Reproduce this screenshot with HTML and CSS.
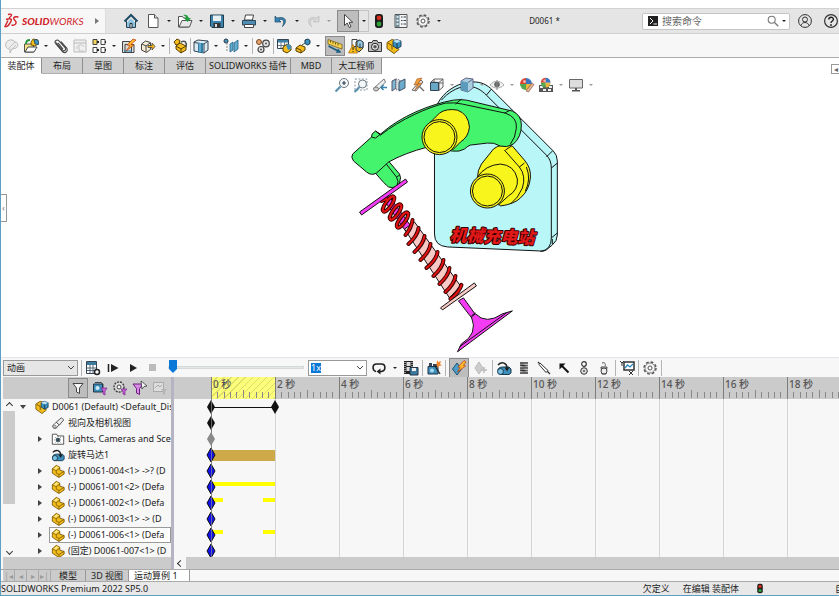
FILE: index.html
```
<!DOCTYPE html>
<html lang="zh-CN">
<head>
    <meta charset="UTF-8">
    <meta name="viewport" content="width=device-width, initial-scale=1.0">
    <title>D0061 - SOLIDWORKS</title>
    <link rel="stylesheet" href="styles.css">
</head>
<body>
    <!-- Icon sprite -->
    <svg class="sprite" aria-hidden="true">
        <symbol id="i-home" viewBox="0 0 16 16"><path d="M3.500 8v6.500h3.500V10h2v4.500h3.500V8" fill="#fff" stroke="#2a3f4c"/><path d="M1.500 8.500 8 2l6.500 6.500" fill="none" stroke="#1f4a66" stroke-width="2"/><path d="M4 9.500 8 5.500l4 4V14H9.500v-4h-3v4H4z" fill="#8cc4e0"/><path d="M7 10.500h2V15H7z" fill="#fff" stroke="#234"/></symbol>
        <symbol id="i-new" viewBox="0 0 16 16"><path d="M3.500 1.500h6l3.500 3.500v9.500H3.500z" fill="#fff" stroke="#555"/><path d="M9.500 1.500V5H13" fill="#ddd" stroke="#555"/></symbol>
        <symbol id="i-open" viewBox="0 0 16 16"><path d="M1.500 14V3.500h4l1 1.500h5V14z" fill="#fff" stroke="#555"/><path d="m2 14 3-6.500h10L12.500 14z" fill="#e8e8e8" stroke="#555"/><path d="M6 2c3-1 5 0 5.500 3H14l-3.500 4L7 5h2C9 3.500 8 3 6 2z" fill="#1f9d3a"/></symbol>
        <symbol id="i-save" viewBox="0 0 16 16"><path d="M1.500 2h13v12.500H3L1.500 13z" fill="#3d84ad" stroke="#1f3c4e"/><path d="M4 2.500h8v5.500H4z" fill="#e8f0f4"/><path d="M4.500 10h7v4.500h-7z" fill="#333"/><path d="M6 11h2v3H6z" fill="#ddd"/></symbol>
        <symbol id="i-print" viewBox="0 0 16 16"><path d="M4.500 2h8l-1 5h-8z" fill="#fff" stroke="#444"/><path d="M1.500 7.500h13v4.500h-13z" fill="#4f8fb5" stroke="#2c4a5c"/><path d="M3.500 11.500h9v3h-9z" fill="#fff" stroke="#444"/></symbol>
        <symbol id="i-undo" viewBox="0 0 16 16"><path d="M2 3v6h6L6 7c4-2 6 1 3.500 6.500C14.500 9 13.500 2.500 4 5z" fill="#3484b5" stroke="#1d4965" stroke-width=".7"/></symbol>
        <symbol id="i-redo" viewBox="0 0 16 16"><path d="M14 3v6H8l2-2c-4-2-6 1-3.500 6.500C1.500 9 2.500 2.500 12 5z" fill="#d8d8d8" stroke="#bbb" stroke-width=".7"/></symbol>
        <symbol id="i-cursor" viewBox="0 0 16 16"><path d="M4.500 1.500v11l2.700-2.500 2 4.500 1.800-.8-2-4.400h3.700z" fill="#fff" stroke="#333" stroke-width=".9"/></symbol>
        <symbol id="i-light" viewBox="0 0 16 16"><rect x="4" y="1" width="8" height="14" rx="3" fill="#1b1b1b"/><circle cx="8" cy="4.800" r="2.400" fill="#d3301f"/><circle cx="8" cy="11" r="2.400" fill="#2fa13b"/></symbol>
        <symbol id="i-list" viewBox="0 0 16 16"><path d="M2 1.500h12v13H2z" fill="#f4f4f4" stroke="#555"/><path d="M2.500 2h4v12h-4z" fill="#6f8a99"/><path d="M3.500 4h2M3.500 7.500h2M3.500 11h2" stroke="#fff" stroke-width="1.500"/><path d="M8 4h1.500M8 7.500h1.500M8 11h1.500M10.500 4H13M10.500 7.500H13M10.500 11H13" stroke="#345"/></symbol>
        <symbol id="i-gear" viewBox="0 0 16 16"><circle cx="8" cy="8" r="6" fill="none" stroke="#555" stroke-width="1.500" stroke-dasharray="2.700 2"/><circle cx="8" cy="8" r="5" fill="#f4f4f4" stroke="#666" stroke-width=".8"/><circle cx="8" cy="8" r="2" fill="#fff" stroke="#555"/></symbol>
        <symbol id="i-part" viewBox="0 0 16 16"><path d="M1.500 5.500 6 1.500l4 2V7l5 1.500v3L9 15.500 1.500 10.500z" fill="#f4bd1b" stroke="#6b4b00" stroke-width=".9"/><path d="m1.500 5.500 4.500 2v3L9 12v3M6 7.500 10 5M9 12l6-3.500" fill="none" stroke="#6b4b00" stroke-width=".8"/><path d="m3 5.500 3.500-3 2.500 1L5.500 6.500z" fill="#ffe98a"/></symbol>
        <symbol id="i-asm" viewBox="0 0 16 16"><path d="M1 4.500 6 1.500l5 1.500V9l2 2.500-5 4-7-5z" fill="#f4bd1b" stroke="#6b4b00" stroke-width=".9"/><path d="m2 5 4 2.500v4" fill="none" stroke="#6b4b00"/><path d="m7 3 3.500-1.500L15 3v5.500l-4 2-4-2.500z" fill="#3b8fc0" stroke="#16394f" stroke-width=".9"/><path d="m7 3 4 2 4-2-4.500-1.500z" fill="#b9e0f2"/><path d="M11 5v5.500" stroke="#16394f"/></symbol>
        <symbol id="i-bubble" viewBox="0 0 16 16"><path d="M2 5c2-4 7-4 9-1 3 0 4 4 1 6l-4 1-2 4v-4C2 11 1 8 2 5z" fill="#ececec" stroke="#bbb"/><path d="m5 10 6-6M8 11l4-4" stroke="#c4c4c4"/></symbol>
        <symbol id="i-insert" viewBox="0 0 16 16"><path d="M1.500 6h9v8h-9z" fill="#f7e388" stroke="#555"/><path d="m2 14 3-5h9l-3 5z" fill="#fff" stroke="#444"/><path d="m8 4 2-3 5 1v4l-3 2-4-1z" fill="#f4bd1b" stroke="#5b4000" stroke-width=".8"/><path d="m11 2 3-.5 1.500 2v3L12 6z" fill="#3f93c2" stroke="#16394f" stroke-width=".7"/><path d="M3 6c0-3 1-4 4-4" fill="none" stroke="#25953b" stroke-width="1.800"/></symbol>
        <symbol id="i-clip" viewBox="0 0 16 16"><path d="M3 4.500 9.500 12c1.500 1.800 4 0 2.800-2L6 2.800C4 1 1 3 2.500 5.500l7 8c2.500 2.500 6 0 4.200-3.500L8 3.500M5 5l5 6" fill="none" stroke="#444" stroke-width="1.100"/></symbol>
        <symbol id="i-ghost" viewBox="0 0 16 16"><path d="M2 2h12v12H2zM2 5h12" fill="#f0f0f0" stroke="#bbb"/><path d="M5 11c-1-4 5-6 7-2M7 8v5h5" fill="none" stroke="#c4c4c4"/></symbol>
        <symbol id="i-pattern" viewBox="0 0 16 16"><path d="M2 1.500h4v5H2z" fill="#f4d55a" stroke="#444"/><path d="M2 9.500h4v5H2zM10 1.500h4v5h-4zM10 9.500h4v5h-4z" fill="#fff" stroke="#444"/><path d="M6 4h2M6 12h2M14 4h1M14 12h1" stroke="#222" stroke-width="2"/></symbol>
        <symbol id="i-smart" viewBox="0 0 16 16"><path d="M1.500 3.500h9v11h-9zM4 6.500h9v8H4z" fill="#ddd" stroke="#444"/><path d="M3 13h8" stroke="#1f7fb0"/><path d="m12 1-6 6 3 .5L5 13l8-6-3-.5L15 2z" fill="#ffb52c" stroke="#b33b10" stroke-width=".7"/></symbol>
        <symbol id="i-move" viewBox="0 0 16 16"><path d="m1.500 6 4-3 5 1.500v7l-4 3-5-2.500z" fill="#f5edd4" stroke="#444"/><path d="m2 6 4 2v6M6 8l4-3" fill="none" stroke="#444"/><path d="M8 7.500h4V5l3 3.500L12 12V9.500H8z" fill="#f2b31a" stroke="#333" stroke-width=".7"/></symbol>
        <symbol id="i-show" viewBox="0 0 16 16"><path d="m2 4 3-3 3 1.500L7 6 4 7z" fill="#f4bd1b" stroke="#5b4000"/><path d="M4 8 8 5l6 3v4l-5 3-5-4z" fill="#f4bd1b" stroke="#5b4000"/><path d="m4 8 5 3v4M9 11l5-3" fill="none" stroke="#5b4000"/><path d="M9 4c4-2 6 0 5 5" fill="none" stroke="#555" stroke-width="1.500"/></symbol>
        <symbol id="i-feature" viewBox="0 0 16 16"><path d="m1 4 4-2 10 1v9l-4 3-10-2z" fill="#dceaf1" stroke="#345"/><path d="M1 4.500 11 6v8.500M11 6l4-3" fill="none" stroke="#345"/><path d="M5 5h5v9.500H5z" fill="#2f7fab"/><path d="M7 5v9" stroke="#9cd0e8"/></symbol>
        <symbol id="i-plane" viewBox="0 0 16 16"><circle cx="3" cy="3" r="2" fill="#4b9bc5" stroke="#234"/><path d="m7 6 3-2v8l-3 2zM11 5l4-3v9l-4 3z" fill="#61aed3" stroke="#245f80" stroke-width=".8"/><path d="M4 5v9" stroke="#888" stroke-dasharray="2 1"/></symbol>
        <symbol id="i-gears" viewBox="0 0 16 16"><circle cx="4" cy="4" r="2.500" fill="#e4a06b" stroke="#7b4c28"/><circle cx="11" cy="5.500" r="3.300" fill="#e6e6e6" stroke="#444" stroke-width="1.200"/><circle cx="6" cy="11.500" r="3" fill="#e6e6e6" stroke="#444" stroke-width="1.200"/><circle cx="11" cy="5.500" r="1" fill="#555"/><circle cx="6" cy="11.500" r="1" fill="#555"/></symbol>
        <symbol id="i-bom" viewBox="0 0 16 16"><path d="M1.500 1.500h11v9h-11z" fill="#fff" stroke="#345"/><path d="M2 2h10v2.500H2z" fill="#3c7fa5"/><path d="M2 7.500h10M5 4v6M8.500 4v6" stroke="#678"/><path d="m7 9 4-3 4 2v4l-4 3-4-2z" fill="#f4bd1b" stroke="#5b4000"/><path d="m10 7 3-1 2 2v3l-3 1z" fill="#3d92c0"/></symbol>
        <symbol id="i-explode" viewBox="0 0 16 16"><path d="m1 10 4-3 5 2v3l-4 3-5-2z" fill="#f4bd1b" stroke="#5b4000"/><path d="m1 10 5 2v3" fill="none" stroke="#5b4000"/><path d="m10 2 3-1 2 1.500v3L12.500 7 10 5.500z" fill="#3d92c0" stroke="#16394f"/><path d="m7 7 3-2" stroke="#555"/></symbol>
        <symbol id="i-ruler" viewBox="0 0 16 16"><path d="m1 1.500 14 5v4.500L1 6z" fill="#f7d452" stroke="#6b5200" stroke-width=".7"/><path d="M3.500 2.500v2M6 3.500v2M8.500 4.500v2M11 5.500v2" stroke="#6b5200"/><path d="m1.500 8 9.500 5" stroke="#1f5f84" stroke-width="1.800"/><path d="m9 15 5.500-.5L11 10.500z" fill="#1f5f84"/></symbol>
        <symbol id="i-warn" viewBox="0 0 16 16"><path d="M4 1.500h5v7H4z" fill="#fff" stroke="#444"/><path d="m8 4 3-2 4 2v6l-4 4-3-2z" fill="#f4bd1b" stroke="#234"/><path d="m9 3.500 3-1.500 3 2v5l-3 1-3-2z" fill="#9ccbe2" stroke="#234" stroke-width=".8"/><path d="M12 5.500V10" stroke="#234"/><path d="M5 6.500 9.500 15h-9z" fill="#ffc11c" stroke="#a66200" stroke-width=".7"/><path d="M5 9v3M5 13v1" stroke="#222"/></symbol>
        <symbol id="i-camera" viewBox="0 0 16 16"><path d="M1.500 4.500H5l1-2h4l1 2h3.500v9h-13z" fill="#bbb" stroke="#333"/><circle cx="8" cy="8.800" r="3.500" fill="#f0f0f0" stroke="#222"/><circle cx="8" cy="8.800" r="1.800" fill="#555"/></symbol>
        <symbol id="i-user" viewBox="0 0 16 16"><circle cx="8" cy="8" r="6.400" fill="none" stroke="#333"/><circle cx="8" cy="6.500" r="2.500" fill="none" stroke="#333"/><path d="M4 12.500c1-4 7-4 8 0" fill="none" stroke="#333"/></symbol>
        <symbol id="i-help" viewBox="0 0 16 16"><circle cx="8" cy="8" r="6.400" fill="none" stroke="#333" stroke-width="1.200"/><path d="M5.800 6.500c0-3 4.600-3 4.600-.2C10.400 8 8 8 8 10" fill="none" stroke="#222" stroke-width="1.400"/><circle cx="8" cy="12" r=".9" fill="#222"/></symbol>
        <symbol id="i-search" viewBox="0 0 16 16"><circle cx="6.500" cy="6.500" r="4" fill="none" stroke="#777" stroke-width="1.200"/><path d="m9.500 9.500 4.500 4.500" stroke="#777" stroke-width="1.500"/></symbol>
        <symbol id="i-zoomfit" viewBox="0 0 16 16"><circle cx="10" cy="6" r="4.500" fill="#f4f8fa" stroke="#6b7780"/><path d="M8 6h4M10 4v4" stroke="#345" stroke-width="1.200"/><path d="m6.500 9.500-5 5" stroke="#5b91ae" stroke-width="2.200"/></symbol>
        <symbol id="i-zoomarea" viewBox="0 0 16 16"><path d="M2 2h12v11H2z" fill="none" stroke="#8a9aa4" stroke-dasharray="2 1.500"/><circle cx="9.500" cy="7" r="4" fill="#f4f8fa" stroke="#6b7780"/><path d="m6.500 10-5 5" stroke="#5b91ae" stroke-width="2.200"/></symbol>
        <symbol id="i-prev" viewBox="0 0 16 16"><path d="m2 11 10-9 1.500 3L6 13z" fill="#eee" stroke="#777"/><ellipse cx="4" cy="12" rx="2.500" ry="2" fill="#ccc" stroke="#777"/><path d="M15 10.500H9m2.500-2.500L9 10.500l2.500 2.500" fill="none" stroke="#3b83a8" stroke-width="1.500"/></symbol>
        <symbol id="i-section" viewBox="0 0 16 16"><path d="m1 4 4-2v9l-4 3z" fill="#7eb8d4" stroke="#556"/><path d="m5 2 4 1v9l-4 1z" fill="#d5dce0" stroke="#667" stroke-dasharray="1 1"/><path d="m8 5 6-3v9l-6 3z" fill="#6aaaca" stroke="#456"/></symbol>
        <symbol id="i-view" viewBox="0 0 16 16"><path d="m2 13 9-10 2 2-7 9z" fill="#eee" stroke="#666"/><path d="M7 2 4 8l4-1-3 6 7-7-4 .500L12 1z" fill="#f0a236" stroke="#a54b1c" stroke-width=".6"/><path d="m9 9 5 5" stroke="#777" stroke-width="1.500"/></symbol>
        <symbol id="i-orient" viewBox="0 0 16 16"><path d="m2 5 3-3h9v8l-4 3.500V5.500z" fill="#f4f4f4" stroke="#666"/><path d="M1.500 5.500h8v8h-8z" fill="#68a7c5" stroke="#345"/><path d="m10 5.500 4-3.500M5 2v3M14 6h-4" stroke="#666"/></symbol>
        <symbol id="i-cube" viewBox="0 0 16 16"><path d="m2 4 5-3 7 1v9l-5 4-7-2z" fill="#a9cfdf" stroke="#668"/><path d="m2 4 7 1.500V15l-7-2z" fill="#5b9aba"/><path d="m9 5.500 5-3.500" stroke="#668"/></symbol>
        <symbol id="i-eye" viewBox="0 0 16 16"><path d="M1 8c4-5 10-5 14 0-4 4-10 4-14 0z" fill="#f2f2f2" stroke="#aaa"/><circle cx="8" cy="7.500" r="2.800" fill="#666"/><path d="M8 3v10" stroke="#888"/></symbol>
        <symbol id="i-ball" viewBox="0 0 16 16"><path d="M7 7V1a6 6 0 0 0-6 6z" fill="#d8432f"/><path d="M7 7h6a6 6 0 0 0-6-6z" fill="#3976be"/><path d="M1 7a6 6 0 0 0 6 6V7z" fill="#52a84f"/><path d="M7 7v6a6 6 0 0 0 6-6z" fill="#e9b73f"/><circle cx="5.500" cy="4.500" r="1.500" fill="#fff" opacity=".6"/></symbol>
        <symbol id="i-appear" viewBox="0 0 16 16"><use href="#i-ball"/><path d="m7 14 6-8 2 1.500L9.500 15z" fill="#e4b58c" stroke="#744" stroke-width=".6"/></symbol>
        <symbol id="i-scene" viewBox="0 0 16 16"><path d="M1 8h14v7H1z" fill="#555"/><path d="M2 9h3v2H2zM11 9h3v2h-3zM5 12h3v2H5zM10 12h3v2h-3z" fill="#eee"/><g transform="translate(2)"><use href="#i-ball" width="13" height="13"/></g></symbol>
        <symbol id="i-monitor" viewBox="0 0 16 16"><path d="M1.500 2.500h13v8.500h-13z" fill="#ddd" stroke="#666"/><path d="M7 11h2v2h3v1.500H4V13h3z" fill="#555"/></symbol>
        <symbol id="i-calc" viewBox="0 0 16 16"><path d="M1.500 1.500h10v12h-10z" fill="#fff" stroke="#345"/><path d="M2 2h9v3H2z" fill="#3e7c9f"/><path d="M2 8h9M2 10.500h9M5 5v8M8 5v8" stroke="#567"/><circle cx="12" cy="12" r="2.500" fill="#fff" stroke="#222" stroke-width="1.500"/></symbol>
        <symbol id="i-playstart" viewBox="0 0 16 16"><path d="M3.500 4v8" stroke="#222" stroke-width="1.500"/><path d="m6 4 7.500 4L6 12z" fill="#222"/></symbol>
        <symbol id="i-play" viewBox="0 0 16 16"><path d="m5 4 7 4-7 4z" fill="#222"/></symbol>
        <symbol id="i-stop" viewBox="0 0 16 16"><path d="M4 4h7v7H4z" fill="#bbb"/></symbol>
        <symbol id="i-loop" viewBox="0 0 16 16"><path d="M5 11.500C1 10.500 1 4 5.500 4h5c4.500 0 4.500 7 0 7.500H8" fill="none" stroke="#222" stroke-width="1.600"/><path d="m9.500 8.500-4 3 4 3z" fill="#222"/></symbol>
        <symbol id="i-film" viewBox="0 0 16 16"><path d="M1 1h9v13H1z" fill="#222"/><path d="M3.500 2h4v4h-4zM3.500 7h4v4h-4z" fill="#ddd"/><path d="M2 2v12M9 2v7" stroke="#fff" stroke-dasharray="1 1"/><path d="M7 7.500h8V15H7z" fill="#3e7c9f" stroke="#234"/><path d="M9 8h4v3H9z" fill="#eee"/></symbol>
        <symbol id="i-wizard" viewBox="0 0 16 16"><path d="M2 6.500h10V14H2z" fill="#3c8ebb" stroke="#234"/><path d="M3 3h3v3H3zM7 4h4v2H7z" fill="#345"/><circle cx="6" cy="10.500" r="2" fill="#a8d8ef"/><path d="m9 6 5 8" stroke="#222" stroke-width="1.300"/><path d="m11 0 1 2 3-1-1 3 2 1.500-3 .5-1 2-1.500-3z" fill="#f5842a"/></symbol>
        <symbol id="i-autokey" viewBox="0 0 16 16"><path d="m6 3 4.500 6L6 15 1.500 9z" fill="#4b9cc9" stroke="#1e5470"/><path d="m13 .500-6 6.500 2 .5L6.500 12l8-6-2-.5L15 2z" fill="#ffb52c" stroke="#b33b10" stroke-width=".7"/></symbol>
        <symbol id="i-addkey" viewBox="0 0 16 16"><path d="m6 2 4 6-4 6-4-6z" fill="#ccc" stroke="#bbb"/><path d="M11 7v6M8 10h6" stroke="#bbb" stroke-width="1.500"/></symbol>
        <symbol id="i-motor" viewBox="0 0 16 16"><path d="M2 10c0-2 2-3 5-3h6l2 2v4l-2 1.500H4z" fill="#3c8ebb" stroke="#16394f"/><ellipse cx="4.500" cy="11.500" rx="3" ry="3" fill="#7cc0e0" stroke="#16394f"/><path d="M2 5c4-4 9-2 9 3" fill="none" stroke="#222" stroke-width="1.500"/><path d="m8.500 7.500 5 0-2.500 4z" fill="#222"/></symbol>
        <symbol id="i-spring" viewBox="0 0 16 16"><path d="M4 3h8M4 5.500h8M4 8h8M4 10.500h8M4 13h8" stroke="#333" stroke-width="1.700"/><path d="m4 5 8-2M4 7.500l8-2M4 10l8-2M4 12.500l8-2" stroke="#777"/></symbol>
        <symbol id="i-damper" viewBox="0 0 16 16"><path d="m2 2 12 12" stroke="#333" stroke-width="1.200"/><path d="m4 3 8 7.500-2 2L3 4.500z" fill="#fff" stroke="#333"/></symbol>
        <symbol id="i-force" viewBox="0 0 16 16"><path d="m12.500 12.500-7-7" stroke="#111" stroke-width="2"/><path d="M3.500 3.500h6l-6 6z" fill="#111"/></symbol>
        <symbol id="i-contact" viewBox="0 0 16 16"><circle cx="8" cy="4" r="2.300" fill="#fff" stroke="#333" stroke-width="1.200"/><circle cx="8" cy="11" r="3.300" fill="#ddd" stroke="#333"/><circle cx="8" cy="11" r="1" fill="#555"/></symbol>
        <symbol id="i-gravity" viewBox="0 0 16 16"><path d="M5 7h6l-1 7H6z" fill="#ddd" stroke="#444"/><circle cx="8" cy="11" r="3" fill="#eee" stroke="#444"/><path d="M6 3c3-1 4 1 3 3" fill="none" stroke="#555"/></symbol>
        <symbol id="i-result" viewBox="0 0 16 16"><path d="M5 2h10v8H5z" fill="#fff" stroke="#333" stroke-width="1.500"/><path d="m6 8 2.500-3L11 7l3-3" fill="none" stroke="#2d88bb" stroke-width="1.300"/><path d="m1 1 2 2 2-2M3 3v3M10 11l4 4M14 11l-4 4" fill="none" stroke="#333"/></symbol>
        <symbol id="i-filter" viewBox="0 0 16 16"><path d="M3 3.500h10L9.500 8v5.500l-3-1.500V8z" fill="#f6f6f6" stroke="#444"/></symbol>
        <symbol id="i-filteranim" viewBox="0 0 16 16"><path d="M1.500 4h9v8h-9z" fill="#3c8ebb" stroke="#234"/><path d="M3 2.500h6l2 1.500v5" fill="none" stroke="#345"/><circle cx="5.500" cy="8" r="2" fill="#cfeaf6"/><path d="M9 8h6l-2 3v4l-2-1v-3z" fill="#c768d6" stroke="#7c2390" stroke-width=".7"/></symbol>
        <symbol id="i-filterdrive" viewBox="0 0 16 16"><circle cx="7" cy="7" r="5" fill="#ddd" stroke="#444" stroke-width="1.500" stroke-dasharray="2 1"/><circle cx="7" cy="7" r="2" fill="#fff" stroke="#444"/><path d="M9 9h6l-2 2.500V15l-2-1v-2.500z" fill="#c768d6" stroke="#7c2390" stroke-width=".7"/></symbol>
        <symbol id="i-filtersel" viewBox="0 0 16 16"><path d="M1 4h10L7.500 8.500v6l-3-1.500V8.500z" fill="#d98be6" stroke="#6c1d80"/><path d="m9 1 6 5-3 .5-2 2.500z" fill="#fff" stroke="#333" stroke-width=".8"/></symbol>
        <symbol id="i-filterres" viewBox="0 0 16 16"><path d="M1.500 2.500h10v9h-10zM3 8l3-3 2 2 2-2" fill="#ddd" stroke="#aaa"/><path d="M9 9h6l-2 2.500V15l-2-1v-2.500z" fill="#b5b5b5"/></symbol>
        <symbol id="i-torch" viewBox="0 0 16 16"><path d="m6 7 6-5 2.500 2.500-5 6z" fill="#eee" stroke="#444"/><path d="M2 11 6 7l3 3-3 4c-2 1-5-1-4-3z" fill="#fff" stroke="#444"/><ellipse cx="4" cy="12" rx="2" ry="1.500" fill="#ccc" stroke="#555" stroke-width=".7"/></symbol>
        <symbol id="i-lights" viewBox="0 0 16 16"><path d="M1.500 14V2.500h5l1 2h7V14z" fill="#fff" stroke="#444"/><circle cx="8" cy="9" r="2.500" fill="#456b80"/><path d="M8 5v8M4 9h8M5 6l6 6M11 6l-6 6" stroke="#333" stroke-dasharray="1 1"/></symbol>
        <symbol id="i-ticks" viewBox="0 0 64 22"><path d="M.5 0v22" stroke="#7d7d7d"/><path d="M6.500 15v6M13.500 15v6M19.500 15v6M25.500 15v6M32.500 13v8M38.500 15v6M45.500 15v6M51.500 15v6M57.500 15v6" stroke="#888"/></symbol>
    </svg>

    <!-- Title bar -->
    <header class="titlebar">
        <div class="brand">
            <svg class="brand-mark" viewBox="0 0 16 16" aria-hidden="true"><path d="M4 1.500c4-1 5 .5 1 3.500M2 6.500c6-2 7 0 3 5-1 1.500-3 2.500-4 2l3-6M14.500 4c-5-1-6 1-3.500 3.500S11 13 7.500 12" fill="none" stroke="#d2232a" stroke-width="1.400"/></svg>
            <span class="brand-name"><b>SOLID</b>WORKS</span>
            <button class="brand-more" aria-label="菜单"></button>
        </div>
        <nav class="quick" aria-label="快速访问">
            <button class="tool spaced" aria-label="主页"><svg><use href="#i-home"/></svg></button>
            <button class="tool" aria-label="新建"><svg><use href="#i-new"/></svg></button><button class="drop" aria-label="新建选项"></button>
            <button class="tool" aria-label="打开"><svg><use href="#i-open"/></svg></button><button class="drop" aria-label="打开选项"></button>
            <button class="tool" aria-label="保存"><svg><use href="#i-save"/></svg></button><button class="drop" aria-label="保存选项"></button>
            <button class="tool" aria-label="打印"><svg><use href="#i-print"/></svg></button><button class="drop" aria-label="打印选项"></button>
            <button class="tool" aria-label="撤销"><svg><use href="#i-undo"/></svg></button><button class="drop" aria-label="撤销选项"></button>
            <button class="tool" aria-label="重做"><svg><use href="#i-redo"/></svg></button><button class="drop faded" aria-label="重做选项"></button>
            <button class="tool pressed" aria-label="选择"><svg><use href="#i-cursor"/></svg></button><button class="drop boxed" aria-label="选择选项"></button>
            <button class="tool spaced" aria-label="重建模型"><svg><use href="#i-light"/></svg></button>
            <button class="tool spaced" aria-label="文件属性"><svg><use href="#i-list"/></svg></button>
            <button class="tool" aria-label="选项"><svg><use href="#i-gear"/></svg></button><button class="drop" aria-label="更多选项"></button>
        </nav>
        <h1 class="doc-title">D0061 *</h1>
        <div class="search">
            <svg class="prompt" viewBox="0 0 10 10" aria-hidden="true"><path d="M0 0h10v10H0z" fill="#222"/><path d="m2 2 3 3-3 3M5.500 8H9" fill="none" stroke="#fff"/></svg>
            <input class="search-input" type="text" placeholder="搜索命令" aria-label="搜索命令">
            <button class="search-go" aria-label="搜索"><svg><use href="#i-search"/></svg></button>
            <button class="drop narrow" aria-label="搜索范围"></button>
        </div>
        <button class="tool account" aria-label="登录"><svg><use href="#i-user"/></svg></button>
        <button class="tool help" aria-label="帮助"><svg><use href="#i-help"/></svg></button>
    </header>

    <!-- Assembly toolbar -->
    <div class="commands" role="toolbar" aria-label="装配体">
        <button class="tool" aria-label="编辑零部件"><svg><use href="#i-bubble"/></svg></button>
        <button class="tool" aria-label="插入零部件"><svg><use href="#i-insert"/></svg></button><button class="drop narrow" aria-label="插入选项"></button>
        <button class="tool" aria-label="配合"><svg><use href="#i-clip"/></svg></button>
        <button class="tool" aria-label="零部件预览"><svg><use href="#i-ghost"/></svg></button>
        <button class="tool" aria-label="线性阵列"><svg><use href="#i-pattern"/></svg></button><button class="drop narrow" aria-label="阵列选项"></button>
        <button class="tool" aria-label="智能扣件"><svg><use href="#i-smart"/></svg></button>
        <button class="tool" aria-label="移动零部件"><svg><use href="#i-move"/></svg></button><button class="drop narrow" aria-label="移动选项"></button>
        <span class="sep"></span>
        <button class="tool" aria-label="显示隐藏的零部件"><svg><use href="#i-show"/></svg></button>
        <span class="sep"></span>
        <button class="tool" aria-label="装配体特征"><svg><use href="#i-feature"/></svg></button><button class="drop narrow" aria-label="特征选项"></button>
        <button class="tool" aria-label="参考几何体"><svg><use href="#i-plane"/></svg></button><button class="drop narrow" aria-label="几何体选项"></button>
        <span class="sep"></span>
        <button class="tool" aria-label="新建运动算例"><svg><use href="#i-gears"/></svg></button>
        <span class="sep"></span>
        <button class="tool" aria-label="材料明细表"><svg><use href="#i-bom"/></svg></button>
        <button class="tool" aria-label="爆炸视图"><svg><use href="#i-explode"/></svg></button><button class="drop narrow" aria-label="爆炸选项"></button>
        <button class="tool pressed" aria-label="Instant3D"><svg><use href="#i-ruler"/></svg></button>
        <button class="tool" aria-label="更新 SpeedPak"><svg><use href="#i-warn"/></svg></button>
        <button class="tool" aria-label="拍快照"><svg><use href="#i-camera"/></svg></button>
        <button class="tool" aria-label="大型装配体"><svg><use href="#i-asm"/></svg></button>
    </div>

    <!-- Graphics area -->
    <main class="viewport">
        <div class="command-tabs" role="tablist">
            <button class="ctab active" role="tab" aria-selected="true">装配体</button>
            <button class="ctab" role="tab">布局</button>
            <button class="ctab" role="tab">草图</button>
            <button class="ctab" role="tab">标注</button>
            <button class="ctab" role="tab">评估</button>
            <button class="ctab wide" role="tab">SOLIDWORKS 插件</button>
            <button class="ctab" role="tab">MBD</button>
            <button class="ctab medium" role="tab">大工程师</button>
        </div>

        <svg class="model" viewBox="0 58 839 299" role="img" aria-label="凸轮摇臂机构">
            <g stroke="#111" stroke-width="1" stroke-linejoin="round">
                <!-- Plate -->
                <path d="M438 102C443 93 454 84 468 82C478 81 484 83 490 88L553 151Q557 155 557 161V235Q557 241 552 245L546 250Q543 252 539 251L447 247Q434 246 434 234V110z" fill="#b9f6f7"/>
                <path d="M441 100C447 93 456 87 466 86C475 86 481 90 486 95L546 155Q551 160 551 168V238Q551 250 540 251.500M486 95l5-6M546 157l6-6M551 168l6-5M551 238l6-5M552 244V239" fill="none"/>
                <text class="plate-text" x="449" y="241" transform="rotate(2 449 241)">机械充电站</text>
                <!-- Cam -->
                <path d="M493 149Q500 143 512 146L524 160Q531 168 530 178Q529 190 520 198Q514 204 500 206L477 178Q477 170 481 164z" fill="#f8f51c"/>
                <path d="M504 150 519 167Q526 176 522 188Q518 198 510 204M511 146l-6 4M524 163l-5 4M526 167q5 12-1 24" fill="none"/>
                <path d="M477 177Q485 165 500 164Q514 165 517 179Q518 190 508 196L498 205z" fill="#f8f51c"/>
                <circle cx="487" cy="191" r="17" fill="#f8f51c"/>
                <circle cx="487" cy="191" r="15" fill="#f8f51c"/>
                <!-- Rocker arm -->
                <path d="M388 161 399 174Q401 177 399 183Q396 189 388 187Q385 185 374 172z" fill="#43f46c"/>
                <path d="M385 163 396 177Q399 181 396 187M396 177l3-2" fill="none"/>
                <path d="M352 154 371 137Q370 134 375 131L380 134C400 116 430 104 453 100Q460 99 466 100L512 111Q521 115 521 125Q521 137 513 144Q506 148 500 146Q493 142 487 143L470 145Q467 146 464 149Q459 152 452 151L427 147Q404 153 388 162L376 173Q371 176 366 172L353 161Q350 157 352 154z" fill="#43f46c"/>
                <path d="M380 135C400 119 428 107 445 103Q455 102 462 104L505 113Q517 117 516 128Q515 138 510 144M455 104l6-5M504 113l6-3M371 137l4 1 5-4M375 131l5 4" fill="none"/>
                <path d="M428 124 439 113Q446 108 457 110Q468 114 469 127Q468 137 460 142L452 150z" fill="#f8f51c"/>
                <circle cx="439" cy="137" r="17.500" fill="#f8f51c"/>
                <circle cx="439" cy="137" r="15.500" fill="#f8f51c"/>
                <!-- Valve stem -->
                <path d="M382 198l5-4 24 33-6 4z" fill="#f43cf4"/>
                <path d="M404 229 414 222 460 286 449 298z" fill="#f9c9c5"/>
                <path d="M458 301l5-3 13 18-4 3z" fill="#f43cf4"/>
                <path d="M471 317l4-3Q486 325 502 314L512 311 457 352 461 344Q478 334 471 317z" fill="#f43cf4"/>
                <path d="M459 347 506 313M471 316l4-3" fill="none"/>
            </g>
            <!-- Spring: dark pass below, red pass on top -->
            <defs>
                <g id="coils">
                    <ellipse cx="388" cy="204" rx="9" ry="3" transform="rotate(-55 388 204)"/>
                    <ellipse cx="395" cy="212" rx="9" ry="3" transform="rotate(-55 395 212)"/>
                    <ellipse cx="402" cy="220" rx="9" ry="3" transform="rotate(-55 402 220)"/>
                    <path d="M381 201l5-2M412 220Q411 228 405 235M418 228Q417 236 408 244M424 236Q423 244 414 252M430 244Q429 252 420 260M437 252Q436 260 426 268M443 260Q442 268 433 276M449 268Q448 276 439 284M455 276Q454 284 445 292M461 285Q459 292 450 299"/>
                </g>
            </defs>
            <g fill="none" stroke-linecap="round">
                <use href="#coils" stroke="#3a0404" stroke-width="4"/>
                <use href="#coils" stroke="#e51212" stroke-width="2"/>
            </g>
            <path d="M359 212 405 179 407 182 361 215z" fill="#f43cf4" stroke="#111"/>
            <path d="M440 308 474 283 476 286 442 310z" fill="#f9c9c5" stroke="#111"/>
        </svg>

        <!-- Heads-up view toolbar -->
        <div class="hud" role="toolbar" aria-label="视图">
            <button class="tool" aria-label="整屏显示全图"><svg><use href="#i-zoomfit"/></svg></button>
            <button class="tool" aria-label="局部放大"><svg><use href="#i-zoomarea"/></svg></button>
            <button class="tool" aria-label="上一视图"><svg><use href="#i-prev"/></svg></button>
            <button class="tool" aria-label="剖面视图"><svg><use href="#i-section"/></svg></button>
            <button class="tool" aria-label="动态注解视图"><svg><use href="#i-view"/></svg></button>
            <button class="tool" aria-label="视图定向"><svg><use href="#i-orient"/></svg></button><button class="drop narrow faded" aria-label="定向选项"></button>
            <button class="tool" aria-label="显示样式"><svg><use href="#i-cube"/></svg></button><button class="drop narrow faded" aria-label="样式选项"></button>
            <button class="tool" aria-label="隐藏/显示项目"><svg><use href="#i-eye"/></svg></button><button class="drop narrow faded" aria-label="项目选项"></button>
            <button class="tool" aria-label="编辑外观"><svg><use href="#i-appear"/></svg></button>
            <button class="tool" aria-label="应用布景"><svg><use href="#i-scene"/></svg></button><button class="drop narrow faded" aria-label="布景选项"></button>
            <button class="tool" aria-label="视图设定"><svg><use href="#i-monitor"/></svg></button><button class="drop narrow faded" aria-label="设定选项"></button>
        </div>
        <button class="flyout flyout-left" aria-label="展开设计树">‹</button>
        <button class="flyout flyout-right" aria-label="展开任务窗格">◂</button>
    </main>

    <!-- MotionManager toolbar -->
    <div class="motion-bar" role="toolbar" aria-label="运动算例">
        <select class="study-type" aria-label="算例类型"><option>动画</option></select>
        <span class="sep"></span>
        <button class="tool" aria-label="计算"><svg><use href="#i-calc"/></svg></button>
        <button class="tool" aria-label="从头播放"><svg><use href="#i-playstart"/></svg></button>
        <button class="tool" aria-label="播放"><svg><use href="#i-play"/></svg></button>
        <button class="tool" aria-label="停止"><svg><use href="#i-stop"/></svg></button>
        <input class="position" type="range" min="0" max="100" value="0" aria-label="播放位置">
        <select class="speed" aria-label="播放速度"><option>1x</option></select>
        <button class="tool" aria-label="播放模式"><svg><use href="#i-loop"/></svg></button><button class="drop narrow" aria-label="播放模式选项"></button>
        <button class="tool" aria-label="保存动画"><svg><use href="#i-film"/></svg></button>
        <span class="sep"></span>
        <button class="tool" aria-label="动画向导"><svg><use href="#i-wizard"/></svg></button>
        <span class="sep"></span>
        <button class="tool pressed" aria-label="自动键码"><svg><use href="#i-autokey"/></svg></button>
        <button class="tool" aria-label="添加键码"><svg><use href="#i-addkey"/></svg></button>
        <span class="sep"></span>
        <button class="tool" aria-label="马达"><svg><use href="#i-motor"/></svg></button>
        <button class="tool" aria-label="弹簧"><svg><use href="#i-spring"/></svg></button>
        <button class="tool" aria-label="阻尼"><svg><use href="#i-damper"/></svg></button>
        <button class="tool" aria-label="力"><svg><use href="#i-force"/></svg></button>
        <button class="tool" aria-label="接触"><svg><use href="#i-contact"/></svg></button>
        <button class="tool" aria-label="引力"><svg><use href="#i-gravity"/></svg></button>
        <span class="sep"></span>
        <button class="tool" aria-label="结果和图解"><svg><use href="#i-result"/></svg></button>
        <span class="sep"></span>
        <button class="tool" aria-label="运动算例属性"><svg><use href="#i-gear"/></svg></button>
        <span class="sep"></span>
    </div>

    <section class="motion">
        <div class="tree-panel">
            <div class="tree-filters">
                <button class="tool pressed" aria-label="无过滤"><svg><use href="#i-filter"/></svg></button>
                <button class="tool" aria-label="过滤动画"><svg><use href="#i-filteranim"/></svg></button>
                <button class="tool" aria-label="过滤驱动"><svg><use href="#i-filterdrive"/></svg></button>
                <button class="tool" aria-label="过滤选定"><svg><use href="#i-filtersel"/></svg></button>
                <button class="tool" aria-label="过滤结果"><svg><use href="#i-filterres"/></svg></button>
            </div>
            <div class="tree-body">
                <div class="vscroll">
                    <button class="vscroll-btn up" aria-label="向上滚动"></button>
                    <div class="vscroll-thumb"></div>
                    <button class="vscroll-btn down" aria-label="向下滚动"></button>
                </div>
                <ul class="tree">
                    <li class="node root"><svg class="node-icon"><use href="#i-asm"/></svg>D0061 (Default) &lt;Default_Dis</li>
                    <li class="node leaf"><svg class="node-icon"><use href="#i-torch"/></svg>视向及相机视图</li>
                    <li class="node"><svg class="node-icon"><use href="#i-lights"/></svg>Lights, Cameras and Sce</li>
                    <li class="node leaf"><svg class="node-icon"><use href="#i-motor"/></svg>旋转马达1</li>
                    <li class="node"><svg class="node-icon"><use href="#i-part"/></svg>(-) D0061-004&lt;1&gt; -&gt;? (D</li>
                    <li class="node"><svg class="node-icon"><use href="#i-part"/></svg>(-) D0061-001&lt;2&gt; (Defa</li>
                    <li class="node"><svg class="node-icon"><use href="#i-part"/></svg>(-) D0061-002&lt;1&gt; (Defa</li>
                    <li class="node"><svg class="node-icon"><use href="#i-part"/></svg>(-) D0061-003&lt;1&gt; -&gt; (D</li>
                    <li class="node"><span class="focus"><svg class="node-icon"><use href="#i-part"/></svg>(-) D0061-006&lt;1&gt; (Defa</span></li>
                    <li class="node"><svg class="node-icon"><use href="#i-part"/></svg>(固定) D0061-007&lt;1&gt; (D</li>
                </ul>
            </div>
            <div class="tree-foot"></div>
        </div>

        <div class="timeline">
            <div class="ruler">
                <div class="mark current"><svg class="ticks"><use href="#i-ticks"/></svg><span>0 秒</span></div>
                <div class="mark"><svg class="ticks"><use href="#i-ticks"/></svg><span>2 秒</span></div>
                <div class="mark"><svg class="ticks"><use href="#i-ticks"/></svg><span>4 秒</span></div>
                <div class="mark"><svg class="ticks"><use href="#i-ticks"/></svg><span>6 秒</span></div>
                <div class="mark"><svg class="ticks"><use href="#i-ticks"/></svg><span>8 秒</span></div>
                <div class="mark"><svg class="ticks"><use href="#i-ticks"/></svg><span>10 秒</span></div>
                <div class="mark"><svg class="ticks"><use href="#i-ticks"/></svg><span>12 秒</span></div>
                <div class="mark"><svg class="ticks"><use href="#i-ticks"/></svg><span>14 秒</span></div>
                <div class="mark"><svg class="ticks"><use href="#i-ticks"/></svg><span>16 秒</span></div>
                <div class="mark"><svg class="ticks"><use href="#i-ticks"/></svg><span>18 秒</span></div>
            </div>
            <svg class="tracks" aria-hidden="true">
                <defs><path id="key" d="M0-7 4 0 0 7-4 0z"/></defs>
                <path d="M37 8.500h64" stroke="#111"/>
                <path d="M37 51h64v11H37z" fill="#cdaa47"/>
                <path d="M37 83h64v4H37zM37 99h12v4H37zM89 99h12v4H89zM37 131h12v4H37zM89 131h12v4H89z" fill="#ff0"/>
                <path d="M37.500 0v158" stroke="#666"/>
                <g fill="#111"><use href="#key" x="37" y="8"/><use href="#key" x="101" y="8"/><use href="#key" x="37" y="24"/></g>
                <use href="#key" x="37" y="40" fill="#8a8a8a"/>
                <g fill="#1010e8" stroke="#111"><use href="#key" x="37" y="56"/><use href="#key" x="37" y="72"/><use href="#key" x="37" y="88"/><use href="#key" x="37" y="104"/><use href="#key" x="37" y="120"/><use href="#key" x="37" y="136"/><use href="#key" x="37" y="152"/></g>
                <path d="M37.500 0v158" stroke="#8a8a8a" opacity=".7"/>
            </svg>
            <div class="hscroll">
                <button class="hscroll-btn" aria-label="向左滚动"></button>
                <div class="hscroll-thumb"></div>
            </div>
        </div>
    </section>

    <!-- Model / study tabs -->
    <div class="study-tabs" role="tablist">
        <div class="tab-nav">
            <button aria-label="第一个">|◂</button><button aria-label="上一个">◂</button><button aria-label="下一个">▸</button><button aria-label="最后一个">▸|</button>
        </div>
        <button class="stab" role="tab">模型</button>
        <button class="stab" role="tab">3D 视图</button>
        <button class="stab active" role="tab" aria-selected="true">运动算例 1</button>
    </div>

    <footer class="status">
        <span class="product">SOLIDWORKS Premium 2022 SP5.0</span>
        <span>欠定义</span>
        <span>在编辑 装配体</span>
        <svg class="status-light" aria-hidden="true"><use href="#i-light"/></svg>
        <span class="units">自定义</span>
    </footer>
</body>
</html>
```
FILE: styles.css
```
*,
*::before {
    margin: 0;
    padding: 0;
    box-sizing: border-box;
}

body {
    font-family: "Noto Sans", "Noto Sans CJK SC", sans-serif;
    font-size: 9px;
    line-height: 14px;
    color: #222;
    background: #fff;
    height: 100vh;
    display: flex;
    flex-direction: column;
    padding-top: 8px;
    border-left: 1px solid #5c9fc4;
    overflow: hidden;
}

button, input, select {
    font: inherit;
    color: inherit;
    border: 0;
    background: none;
}

.sprite {
    display: none;
}

/* Shared toolbar parts */
.tool {
    width: 16px;
    height: 16px;
    flex: none;
}

.tool svg {
    display: block;
    width: 16px;
    height: 16px;
    margin: auto;
}

.tool.pressed {
    width: 20px;
    height: 20px;
    background: #bdbdbd;
    border: 1px solid #8a8a8a;
}

.drop {
    width: 16px;
    height: 16px;
    flex: none;
    display: flex;
    align-items: center;
    justify-content: center;
}

.drop::before {
    content: '';
    border: 2px solid transparent;
    border-top-color: #222;
    border-bottom: 0;
}

.drop.narrow {
    width: 8px;
}

.drop.faded::before {
    border-top-color: #999;
}

.sep {
    width: 1px;
    height: 16px;
    margin: 0 -1px;
    background: #b5b5b5;
    flex: none;
}

/* Title bar */
.titlebar {
    height: 26px;
    flex: none;
    display: flex;
    align-items: center;
    background: #e5e5e5;
    border-top: 1px solid #d2d2d2;
    border-bottom: 1px solid #cfcfcf;
}

.brand {
    width: 105px;
    align-self: stretch;
    display: flex;
    align-items: center;
    padding-left: 3px;
    background: #f7f7f7;
    border-right: 1px solid #ddd;
}

.brand-mark {
    width: 16px;
    height: 16px;
    margin-right: 2px;
}

.brand-name {
    flex: 1;
    font-family: Lato, sans-serif;
    font-size: 10px;
    font-style: italic;
    color: #d2232a;
}

.brand-name b {
    font-weight: 900;
}

.brand-more {
    width: 10px;
    height: 16px;
}

.brand-more::before {
    content: '';
    display: block;
    width: 4px;
    border: 3px solid transparent;
    border-left: 4px solid #777;
    border-right: 0;
}

.quick {
    display: flex;
    align-items: center;
    padding-left: 17px;
}

.quick .spaced {
    margin-right: 6px;
}

.quick .pressed {
    width: 22px;
    height: 22px;
}

.drop.boxed {
    width: 10px;
    height: 22px;
    margin-right: 2px;
    border: 1px solid #c5c5c5;
    border-left: 0;
}

.doc-title {
    flex: 1;
    font-size: 8px;
    font-weight: 400;
    text-align: center;
}

.search {
    width: 148px;
    height: 17px;
    display: flex;
    align-items: center;
    padding-left: 5px;
    padding-right: 1px;
    background: #fff;
    border: 1px solid #c5c5c5;
    border-radius: 2px;
}

.prompt {
    width: 10px;
    height: 10px;
    flex: none;
}

.search-input {
    flex: 1;
    min-width: 0;
    padding-left: 4px;
    font-size: 10px;
    outline: 0;
}

.search-input::placeholder {
    color: #666;
}

.search-go svg {
    display: block;
    width: 14px;
    height: 14px;
}

.account {
    margin-left: 7px;
}

.help {
    margin-left: 10px;
}

/* Assembly toolbar */
.commands {
    height: 24px;
    flex: none;
    display: flex;
    align-items: center;
    gap: 3px;
    padding-left: 3px;
    background: #f7f7f7;
    border-bottom: 1px solid #aaa;
}

/* Graphics area */
.viewport {
    flex: 1;
    min-height: 0;
    position: relative;
}

.command-tabs {
    display: flex;
    position: relative;
    z-index: 1;
    width: fit-content;
}

.ctab {
    width: 41px;
    height: 16px;
    line-height: 14px;
    background: #cfcfcf;
    border-right: 1px solid #8f8f8f;
    border-bottom: 1px solid #b0b0b0;
    white-space: nowrap;
}

.ctab.active {
    background: #fff;
    border-bottom-color: #fff;
}

.ctab.wide {
    width: 85px;
}

.ctab.medium {
    width: 50px;
}

.model {
    position: absolute;
    inset: 0;
    width: 100%;
    height: 100%;
}

.plate-text {
    font-family: "Noto Sans CJK SC", sans-serif;
    font-size: 17px;
    font-weight: 900;
    font-style: italic;
    fill: #e01818;
    stroke: #300;
    stroke-width: 2px;
    paint-order: stroke;
}

.hud {
    position: absolute;
    top: 19px;
    left: 0;
    right: 0;
    display: flex;
    justify-content: center;
    gap: 3px;
    padding-left: 88px;
}

.flyout {
    position: absolute;
    background: #fff;
    border: 1px solid #999;
    font-size: 8px;
    line-height: 8px;
    color: #666;
}

.flyout-left {
    left: 0;
    top: 136px;
    width: 6px;
    height: 28px;
    border-left: 0;
}

.flyout-right {
    right: 0;
    top: 6px;
    width: 8px;
    height: 10px;
    border-right: 0;
}

/* MotionManager toolbar */
.motion-bar {
    height: 20px;
    flex: none;
    display: flex;
    align-items: center;
    gap: 4px;
    padding-left: 2px;
    background: #f7f7f7;
    border-top: 1px solid #e4e4ec;
}

.study-type,
.speed {
    height: 16px;
    appearance: none;
    border: 1px solid #999;
    background: url("data:image/svg+xml,%3Csvg xmlns='http://www.w3.org/2000/svg' width='8' height='5'%3E%3Cpath d='M1 1l3 3 3-3' fill='none' stroke='%23444'/%3E%3C/svg%3E") no-repeat right 2px center;
}

.study-type {
    width: 75px;
    padding-left: 3px;
    background-color: #e6e6e6;
}

.speed {
    width: 59px;
    padding-left: 2px;
    color: #fff;
    background-color: #fff;
    background-image: url("data:image/svg+xml,%3Csvg xmlns='http://www.w3.org/2000/svg' width='8' height='5'%3E%3Cpath d='M1 1l3 3 3-3' fill='none' stroke='%23444'/%3E%3C/svg%3E"), linear-gradient(#0a78d7, #0a78d7);
    background-position: right 2px center, 2px 2px;
    background-size: 8px 5px, 10px 10px;
}

.speed option {
    color: #222;
}

.position {
    width: 136px;
    height: 16px;
    margin-left: 3px;
    appearance: none;
}

.position::-webkit-slider-runnable-track {
    height: 3px;
    background: #e2e6e6;
    border: 1px solid #d5d9d9;
}

.position::-webkit-slider-thumb {
    appearance: none;
    width: 8px;
    height: 13px;
    margin-top: -7px;
    background: #0a78d7;
    clip-path: polygon(0 0, 100% 0, 100% 70%, 50% 100%, 0 70%);
}

/* Motion study */
.motion {
    height: 192px;
    flex: none;
    display: flex;
}

.tree-panel {
    width: 173px;
    flex: none;
    display: flex;
    flex-direction: column;
    padding-left: 2px;
    background: #f7f7f7;
    border-right: 3px solid #b4b4c2;
}

.tree-filters {
    height: 22px;
    display: flex;
    align-items: center;
    justify-content: flex-end;
    gap: 4px;
    padding-right: 3px;
    background: #cbcbcb;
}

.tree-body {
    flex: 1;
    min-height: 0;
    display: flex;
}

.vscroll {
    width: 12px;
    display: flex;
    flex-direction: column;
}

.vscroll-btn,
.hscroll-btn {
    width: 12px;
    height: 12px;
    display: flex;
    align-items: center;
    justify-content: center;
}

.vscroll-btn::before,
.hscroll-btn::before {
    content: '';
    width: 5px;
    height: 5px;
    border: solid #333;
    border-width: 1px 0 0 1px;
    transform: rotate(-45deg);
}

.up::before {
    transform: rotate(45deg);
}

.down::before {
    transform: rotate(225deg);
}

.vscroll-thumb {
    height: 93px;
    margin-bottom: auto;
    background: #cbcbcb;
}

.tree {
    flex: 1;
    min-width: 0;
    list-style: none;
    overflow: hidden;
}

.node {
    height: 16px;
    display: flex;
    align-items: center;
    padding-left: 23px;
    white-space: nowrap;
}

.node::before {
    content: '';
    flex: none;
    width: 4px;
    margin-right: 9px;
    border: 3px solid transparent;
    border-left: 4px solid #444;
    border-right: 0;
}

.node.leaf::before {
    border-left-color: transparent;
}

.node.root {
    padding-left: 5px;
}

.node.root::before {
    width: 6px;
    border: 3px solid transparent;
    border-top: 4px solid #444;
    border-bottom: 0;
}

.node-icon {
    width: 14px;
    height: 14px;
    flex: none;
    margin-right: 3px;
}

.focus {
    flex: 1;
    height: 16px;
    display: flex;
    align-items: center;
    margin-left: -2px;
    padding-left: 1px;
    background: #fff;
    border: 1px solid #999;
}

.tree-foot {
    height: 12px;
    background: #cbcbcb;
}

/* Timeline */
.timeline {
    flex: 1;
    min-width: 0;
    display: flex;
    flex-direction: column;
    background: #f7f7f7;
}

.ruler {
    height: 22px;
    display: flex;
    padding-left: 37px;
    background: #cbcbcb;
    overflow: hidden;
}

.mark {
    width: 64px;
    flex: none;
    display: grid;
    font-size: 10px;
    font-weight: 500;
    color: #555;
}

.mark > * {
    grid-area: 1 / 1;
}

.mark span {
    padding-left: 2px;
}

.mark.current {
    background: repeating-linear-gradient(135deg, #fdfd7c 0 4px, #dede68 4px 5px);
}

.ticks {
    width: 64px;
    height: 22px;
}

.tracks {
    width: 100%;
    flex: 1;
    min-height: 0;
    background: repeating-linear-gradient(90deg, #d4d4d4 0 1px, transparent 1px 64px) 37px 0 no-repeat;
}

.hscroll {
    height: 12px;
    display: flex;
}

.hscroll-thumb {
    flex: 1;
    background: #cbcbcb;
}

/* Bottom tabs */
.study-tabs {
    height: 13px;
    flex: none;
    display: flex;
    padding-left: 2px;
    background: #f7f7f7;
    border-top: 1px solid #aaa;
    border-bottom: 1px solid #aaa;
}

.tab-nav {
    display: flex;
}

.tab-nav button {
    width: 12px;
    font-size: 8px;
    line-height: 10px;
    color: #999;
    background: #cbcbcb;
    border-right: 1px solid #aaa;
}

.stab {
    padding: 0 5px;
    line-height: 11px;
    background: #cbcbcb;
    border-right: 1px solid #999;
    white-space: nowrap;
}

.stab:nth-child(2) {
    padding: 0 8px;
}

.stab.active {
    padding-right: 11px;
    background: #fff;
}

/* Status bar */
.status {
    height: 14px;
    flex: none;
    display: flex;
    align-items: center;
    gap: 13px;
    background: #e8e8e8;
    border-bottom: 1px solid #5c9fc4;
    white-space: nowrap;
}

.product {
    flex: 1;
}

.status-light {
    width: 12px;
    height: 11px;
    margin-left: 2px;
}

.units {
    width: 4px;
    margin-left: 56px;
    overflow: hidden;
}
```
